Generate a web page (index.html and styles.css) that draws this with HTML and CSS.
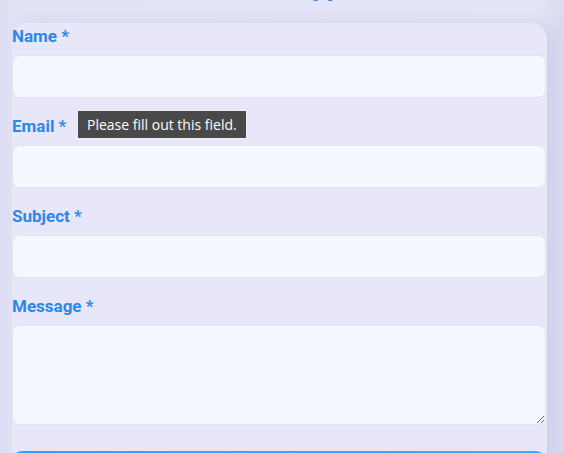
FILE: index.html
```html
<!DOCTYPE html>
<html lang="en">
<head>
<meta charset="utf-8">
<title>Contact</title>
<link rel="stylesheet" href="styles.css">
</head>
<body>
<div class="page">
  <h2 class="page-title">Contact Support</h2>
  <form class="card">
    <div class="field">
      <label class="label" for="name">Name *</label>
      <input class="input" id="name" type="text">
    </div>
    <div class="field">
      <label class="label" for="email">Email *</label>
      <input class="input" id="email" type="email">
      <div class="tooltip">Please fill out this field.</div>
    </div>
    <div class="field">
      <label class="label" for="subject">Subject *</label>
      <input class="input" id="subject" type="text">
    </div>
    <div class="field">
      <label class="label" for="message">Message *</label>
      <textarea class="input textarea" id="message"></textarea>
    </div>
    <button class="submit" type="button">Send Message</button>
  </form>
</div>
</body>
</html>
```
FILE: styles.css
```css
html, body {
  margin: 0;
  padding: 0;
  height: 100%;
  overflow: hidden;
}
body {
  background: linear-gradient(90deg, #dcdcf2 0px, #e2e2f6 12px, #e4e4f7 540px, #d9d9ef 564px);
  font-family: Roboto, "Noto Sans", sans-serif;
}
.page {
  padding: 0 17px 0 12px;
}
.page-title {
  margin: -29px 0 0 0;
  height: 32px;
  line-height: 32px;
  font-size: 26px;
  font-weight: 700;
  color: #2b87e9;
  text-align: center;
}
.card {
  margin-top: 20px;
  background: #e7e7f9;
  border-radius: 16px 16px 0 0;
  padding: 1px 1px 0 0;
  box-shadow: 8px 0 14px rgba(160, 160, 210, 0.25);
  display: flex;
  flex-direction: column;
}
.field {
  position: relative;
  display: flex;
  flex-direction: column;
  gap: 7px;
  margin-bottom: 16px;
}
.field:last-of-type {
  margin-bottom: 26px;
}
.label {
  font-size: 17px;
  line-height: 24px;
  font-weight: 700;
  color: #2b87e9;
}
.input {
  box-sizing: border-box;
  height: 43px;
  width: 100%;
  margin: 0;
  border: 1px solid #e2e5f1;
  border-radius: 8px;
  background: #f5f9ff;
  font: inherit;
  outline: none;
}
.textarea {
  height: 100px;
  resize: vertical;
  display: block;
}
.tooltip {
  position: absolute;
  left: 65px;
  top: -4px;
  box-sizing: border-box;
  height: 29px;
  padding: 0 9px;
  background: #494949;
  border: 1px solid #f0f0f0;
  color: #ffffff;
  font-family: "Open Sans", "Noto Sans", sans-serif;
  font-size: 14px;
  line-height: 27px;
  white-space: nowrap;
}
.submit {
  height: 46px;
  border: none;
  border-radius: 10px;
  background: linear-gradient(90deg, #3b9cf2, #4aa6f5);
  color: #fff;
  font: 700 16px Roboto, sans-serif;
}
```
